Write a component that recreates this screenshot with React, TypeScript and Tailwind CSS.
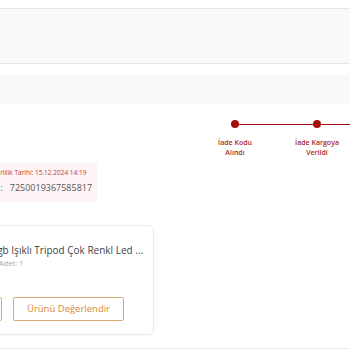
const steps = [
  { title: "İade Kodu", sub: "Alındı" },
  { title: "İade Kargoya", sub: "Verildi" },
];

function Step({ title, sub, first }: { title: string; sub: string; first?: boolean }) {
  return (
    <div className="flex w-[82px] shrink-0 flex-col items-center">
      <div className="flex w-full items-center">
        <div className={first ? "flex-1" : "h-px flex-1 bg-[#a30d0d]"} />
        <div className="h-2 w-2 rounded-full bg-[#a30d0d]" />
        <div className="h-px flex-1 bg-[#a30d0d]" />
      </div>
      <div className="mt-[10px] whitespace-nowrap text-center text-[7px] font-semibold leading-[10px] text-[#a8282b]">
        {title}
        <br />
        {sub}
      </div>
    </div>
  );
}

export default function App() {
  return (
    <div className="h-[350px] w-[350px] overflow-hidden bg-white font-['Open_Sans',sans-serif]">
      {/* header panel */}
      <div className="pt-2">
        <div className="h-[56px] border-y border-[#e6e6e6] bg-[#f9f9f9]" />
      </div>
      <div className="mt-[11px] h-[29px] bg-[#f9f9f9]" />

      {/* status timeline */}
      <div className="flex pl-[194px] pt-4">
        {steps.map((s, i) => (
          <Step key={s.title} title={s.title} sub={s.sub} first={i === 0} />
        ))}
      </div>

      {/* return code */}
      <div className="mt-1 h-[40px] w-[97px] bg-[#fdf5f5] pt-[7px]">
        <div className="-ml-[15px] whitespace-nowrap text-[6.5px] font-medium leading-[8px] text-[#c0392b]">
          Geçerlilik Tarihi: 15.12.2024 14:19
        </div>
        <div className="-ml-[42px] mt-[5px] whitespace-nowrap text-[9px] leading-[12px] text-[#555]">
          İade Kodu<span className="mr-[7px]">:</span>7250019367585817
        </div>
      </div>

      {/* product card */}
      <div className="mt-[23px] border-b border-[#ececec] pb-[13px]">
        <div className="-ml-[10px] w-[164px] rounded-[5px] border border-[#ebebeb] bg-white pb-[13px] pl-2 pt-[18px] shadow-[0_1px_2px_rgba(0,0,0,0.04)]">
          <div className="-ml-[8px] whitespace-nowrap text-[10px] leading-[12px] text-[#444]">
            Rgb Işıklı Tripod Çok Renkl Led ...
          </div>
          <div className="mt-[2px] text-[7.5px] leading-[10px] text-[#aaa]">Adet: 1</div>
          <div className="-ml-[93px] mt-[29px] flex gap-[11px]">
            <button className="h-6 w-[96px] shrink-0 rounded-[2px] border border-[#dba978] text-[9.5px] text-[#d48b3e]">
              İade Detayı
            </button>
            <button className="h-6 w-[111px] shrink-0 rounded-[2px] border border-[#dba978] text-[9.5px] text-[#d48b3e]">
              Ürünü Değerlendir
            </button>
          </div>
        </div>
      </div>
    </div>
  );
}
